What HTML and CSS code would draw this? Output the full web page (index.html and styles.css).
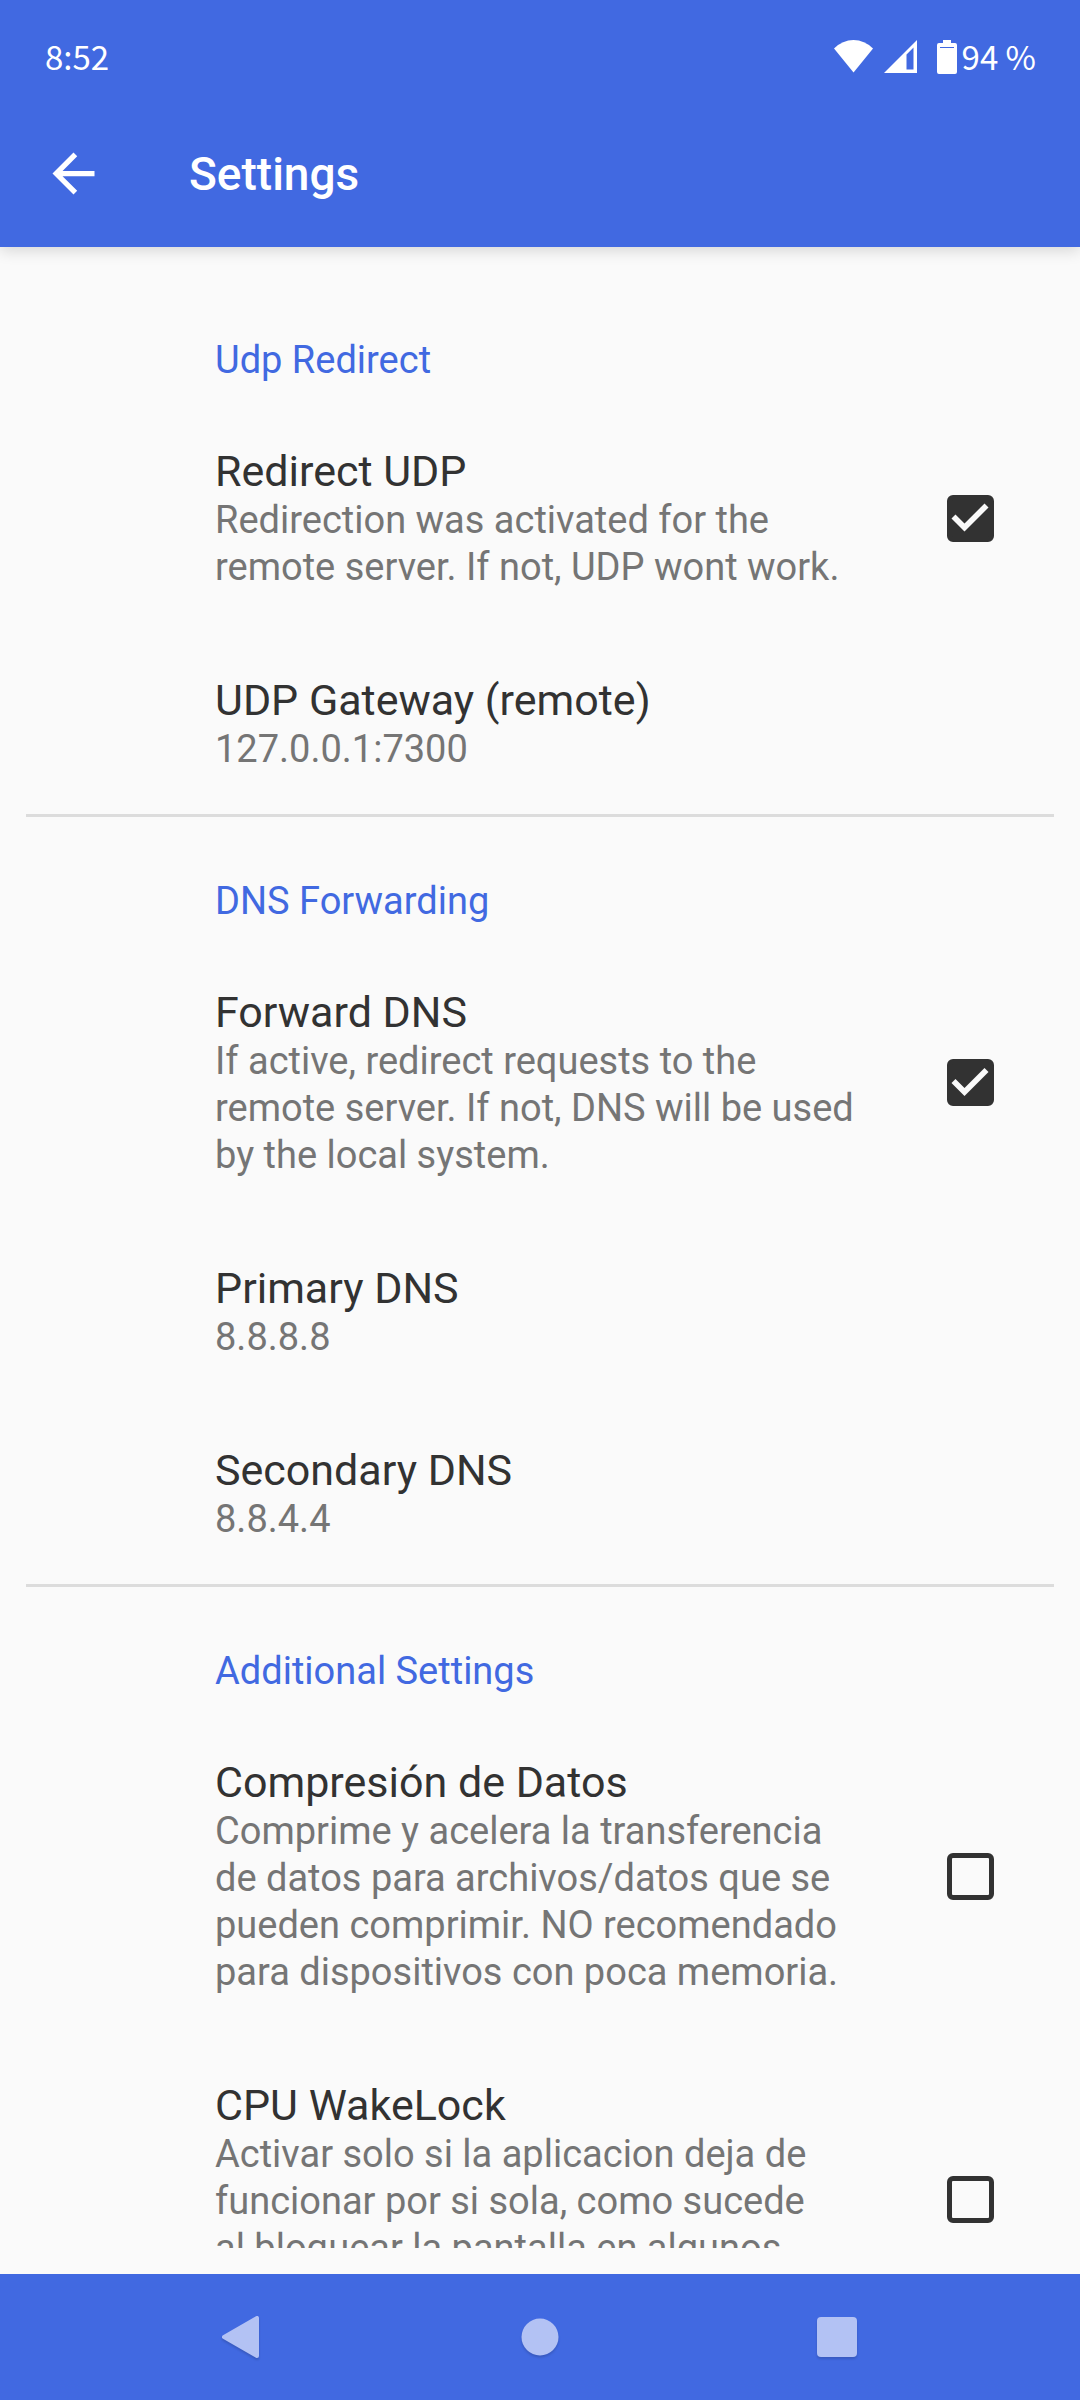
FILE: index.html
```
<!DOCTYPE html>
<html lang="en">
<head>
<meta charset="utf-8">
<meta name="viewport" content="width=device-width, initial-scale=1">
<title>Settings</title>
<link rel="stylesheet" href="styles.css">
</head>
<body>
<header class="header">
  <div class="status">
    <time>8:52</time>
    <div class="status-icons">
      <svg class="wifi" width="39" height="33" viewBox="0 0 39 33" aria-hidden="true"><path d="M0 8.500Q8.500 0 19.500 0T39 8.500L19.500 32.500Z" fill="#fff"/></svg>
      <svg class="signal" width="33" height="33" viewBox="0 0 33 33" aria-hidden="true"><path fill-rule="evenodd" d="M0 33L33 0V33ZM22.500 14.500V29.500H29.500V7.500Z" fill="#fff"/></svg>
      <svg class="battery" width="20" height="34" viewBox="0 0 20 34" aria-hidden="true"><path fill-rule="evenodd" d="M6 0H14V3H18Q20 3 20 5V32Q20 34 18 34H2Q0 34 0 32V5Q0 3 2 3H6ZM3 7V8H17V7Z" fill="#fff"/></svg>
      <span>94 %</span>
    </div>
  </div>
  <div class="toolbar">
    <button class="back" type="button" aria-label="Back">
      <svg width="63" height="63" viewBox="0 0 24 24" aria-hidden="true"><path d="M20 11H7.830l5.590-5.590L12 4l-8 8 8 8 1.410-1.410L7.830 13H20v-2z" fill="#fff"/></svg>
    </button>
    <h1 class="title">Settings</h1>
  </div>
</header>

<main class="list">
  <section class="group">
    <h2 class="category">Udp Redirect</h2>
    <label class="row">
      <span class="text"><span class="name">Redirect UDP</span><span class="summary">Redirection was activated for the remote server. If not, UDP wont work.</span></span>
      <input class="check" type="checkbox" checked>
    </label>
    <button class="row" type="button">
      <span class="text"><span class="name">UDP Gateway (remote)</span><span class="summary">127.0.0.1:7300</span></span>
    </button>
  </section>
  <section class="group">
    <h2 class="category">DNS Forwarding</h2>
    <label class="row">
      <span class="text"><span class="name">Forward DNS</span><span class="summary">If active, redirect requests to the remote server. If not, DNS will be used by the local system.</span></span>
      <input class="check" type="checkbox" checked>
    </label>
    <button class="row" type="button">
      <span class="text"><span class="name">Primary DNS</span><span class="summary">8.8.8.8</span></span>
    </button>
    <button class="row" type="button">
      <span class="text"><span class="name">Secondary DNS</span><span class="summary">8.8.4.4</span></span>
    </button>
  </section>
  <section class="group">
    <h2 class="category">Additional Settings</h2>
    <label class="row">
      <span class="text"><span class="name">Compresión de Datos</span><span class="summary">Comprime y acelera la transferencia de datos para archivos/datos que se pueden comprimir. NO recomendado para dispositivos con poca memoria.</span></span>
      <input class="check" type="checkbox">
    </label>
    <label class="row">
      <span class="text"><span class="name">CPU WakeLock</span><span class="summary">Activar solo si la aplicacion deja de funcionar por si sola, como sucede al&nbsp;bloquear la pantalla en algunos dispositivos.</span></span>
      <input class="check" type="checkbox">
    </label>
  </section>
</main>

<nav class="navbar" aria-label="System">
  <button type="button" aria-label="Back"><svg width="44" height="44" viewBox="0 0 44 44" aria-hidden="true"><path d="M3 22L36 3V41Z" fill="#b3c2f4" stroke="#b3c2f4" stroke-width="4" stroke-linejoin="round"/></svg></button>
  <button type="button" aria-label="Home"><svg width="44" height="44" viewBox="0 0 44 44" aria-hidden="true"><circle cx="22" cy="22" r="18.500" fill="#b3c2f4"/></svg></button>
  <button type="button" aria-label="Recent apps"><svg width="44" height="44" viewBox="0 0 44 44" aria-hidden="true"><rect x="2" y="2" width="40" height="40" rx="4" fill="#b3c2f4"/></svg></button>
</nav>
</body>
</html>
```
FILE: styles.css
```
* {
  box-sizing: border-box;
}

body {
  margin: 0;
  height: 100vh;
  display: flex;
  flex-direction: column;
  background: #fafafa;
  color: #323232;
  font-family: Roboto, sans-serif;
}

button {
  margin: 0;
  padding: 0;
  border: 0;
  background: none;
  color: inherit;
  font: inherit;
  text-align: left;
}

svg {
  display: block;
}

.header {
  flex: none;
  background: #4169e1;
  color: #fff;
  box-shadow: 0 4px 14px rgba(0, 0, 0, 0.14);
  z-index: 1;
}

.status {
  display: flex;
  justify-content: space-between;
  height: 100px;
  padding: 36px 44px 0 45px;
  font: 33px/40px "Noto Sans CJK JP", sans-serif;
}

.status-icons {
  display: flex;
  align-items: flex-start;
}

.wifi,
.signal,
.battery {
  margin-top: 4px;
}

.wifi {
  margin-right: 11px;
}

.signal {
  margin-right: 20px;
}

.battery {
  margin-right: 5px;
}

.toolbar {
  display: flex;
  align-items: center;
  height: 147px;
  padding-left: 42px;
  gap: 84px;
}

.title {
  margin: 0;
  font-size: 46px;
  font-weight: 500;
  line-height: 56px;
}

.list {
  flex: 1;
  min-height: 0;
  margin-bottom: 26px;
  padding-top: 29px;
  overflow: hidden;
}

.group + .group::before {
  content: "";
  display: block;
  height: 3px;
  margin: 0 26px;
  background: #dcdcdc;
}

.category {
  margin: 0;
  padding: 61px 24px 19px 215px;
  color: #4169e1;
  font-size: 38px;
  font-weight: 400;
  line-height: 47px;
}

.row {
  display: grid;
  grid-template-columns: 1fr 220px;
  align-items: center;
  width: 100%;
  padding: 42px 0 41px 215px;
}

.name,
.summary {
  display: block;
}

.name {
  font-size: 43px;
  line-height: 52px;
}

.summary {
  color: #757575;
  font-size: 38px;
  line-height: 47px;
}

.check {
  appearance: none;
  justify-self: center;
  width: 47px;
  height: 47px;
  margin: 0;
  border: 5px solid #323232;
  border-radius: 6px;
}

.check:checked {
  background: #323232;
}

.check:checked::before {
  content: "";
  display: block;
  width: 47px;
  height: 47px;
  margin: -5px;
  background: #fafafa;
  clip-path: polygon(5px 24px, 18px 37px, 42px 13px, 38px 9px, 18px 29px, 9px 20px);
}

.navbar {
  flex: none;
  display: grid;
  grid-template-columns: repeat(3, 1fr);
  height: 126px;
  padding: 0 94px;
  background: #4169e1;
}

.navbar button {
  display: grid;
  place-items: center;
}

.navbar svg {
  filter: drop-shadow(0 2px 1px rgba(0, 0, 0, 0.15));
}
```
